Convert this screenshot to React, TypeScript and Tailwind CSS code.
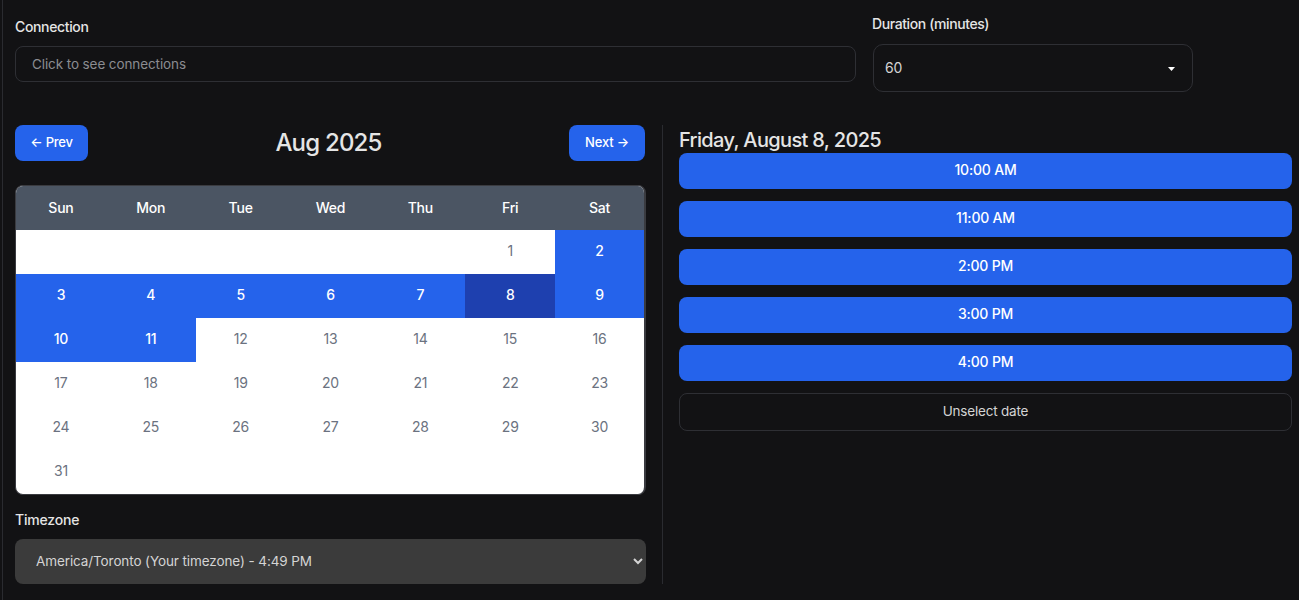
import React from "react";

const days = ["Sun", "Mon", "Tue", "Wed", "Thu", "Fri", "Sat"];
const available = [2, 3, 4, 5, 6, 7, 8, 9, 10, 11];
const slots = ["10:00 AM", "11:00 AM", "2:00 PM", "3:00 PM", "4:00 PM"];
const cells: (number | null)[] = [
  ...Array(5).fill(null),
  ...Array.from({ length: 31 }, (_, i) => i + 1),
  ...Array(6).fill(null),
];

const Calendar = () => (
  <div className="h-[310px] overflow-hidden rounded-lg border border-r-2 border-[#3a3b40] bg-white">
    <div className="grid h-11 grid-cols-[repeat(6,89.86px)_1fr] bg-[#4b5563]">
      {days.map((d) => (
        <div key={d} className="flex items-center justify-center text-sm font-medium text-white">
          {d}
        </div>
      ))}
    </div>
    <div className="grid grid-cols-[repeat(6,89.86px)_1fr]">
      {cells.map((n, i) => {
        const selected = n === 8;
        const open = n !== null && available.includes(n);
        return (
          <div
            key={i}
            className={`flex h-11 items-center justify-center pb-0.5 text-sm ${
              selected
                ? "bg-[#1e40af] font-medium text-white"
                : open
                  ? "bg-[#2563eb] font-medium text-white"
                  : "text-[#6b7280]"
            }`}
          >
            {n}
          </div>
        );
      })}
    </div>
  </div>
);

export default function App() {
  return (
    <div className="h-[600px] overflow-hidden bg-[#121214] pl-[2px] font-['Inter',sans-serif] tracking-[-0.2px] text-[#e5e5e5]">
      <div className="h-full border-l border-[#2a2b30] pl-3 pr-[7px]">
        {/* Top row */}
        <div className="flex h-[125px] items-start gap-[17px]">
          <div className="w-[841px] pt-[18px]">
            <div className="text-sm font-medium leading-[18px] tracking-[-0.35px] text-[#e5e5e5]">Connection</div>
            <div className="mt-2.5 flex h-9 items-center rounded-lg border border-[#2e2f34] pl-4 text-[13.5px] tracking-[-0.1px] text-[#8b8c91]">
              Click to see connections
            </div>
          </div>
          <div className="w-80 pt-[15px]">
            <div className="-ml-px text-sm font-medium leading-[18px] tracking-[-0.4px] text-[#e5e5e5]">Duration (minutes)</div>
            <div className="mt-[11px] flex h-12 items-center justify-between rounded-[10px] border border-[#2e2f34] pl-[11px] pr-[17px] text-sm text-[#d4d4d4]">
              <span className="-mt-px">60</span>
              <svg width="7" height="4" viewBox="0 0 7 4" className="mt-[2px]">
                <path d="M0 0h7L3.5 4z" fill="#fff" />
              </svg>
            </div>
          </div>
        </div>

        <div className="flex items-start">
          {/* Left column */}
          <div className="w-[631px]">
            <div className="flex h-9 items-center justify-between">
              <button className="h-9 w-[73px] rounded-lg bg-[#2563eb] text-[13px] font-medium text-white">
                ← Prev
              </button>
              <div className="text-2xl font-medium tracking-[-0.8px] text-[#e5e5e5]">Aug 2025</div>
              <button className="mr-px h-9 w-[76px] rounded-lg bg-[#2563eb] text-[13px] font-medium text-white">
                Next →
              </button>
            </div>
            <div className="mt-6">
              <Calendar />
            </div>
            <div className="mt-4 text-sm font-medium leading-[18px] text-[#e5e5e5]">Timezone</div>
            <select className="mt-[10px] block h-[45px] w-full rounded-lg bg-[#3b3b3b] pb-0.5 pl-[17px] pr-1 text-[13.5px] tracking-[-0.1px] text-[#d4d4d4]">
              <option>America/Toronto (Your timezone) - 4:49 PM</option>
            </select>
          </div>

          {/* Right column */}
          <div className="ml-4 h-[459px] w-px bg-[#2a2b30]" />
          <div className="ml-4 flex-1">
            <div className="mt-[3px] text-xl font-medium leading-[25px] tracking-[-0.65px] text-[#e5e5e5]">Friday, August 8, 2025</div>
            <div className="flex flex-col gap-3">
              {slots.map((s) => (
                <button key={s} className="h-9 w-full rounded-lg bg-[#2563eb] pb-0.5 text-sm font-medium text-white">
                  {s}
                </button>
              ))}
              <button className="h-[38px] w-full rounded-lg border border-[#2e2f34] pb-0.5 text-[13.5px] text-[#d4d4d4]">
                Unselect date
              </button>
            </div>
          </div>
        </div>
      </div>
    </div>
  );
}
